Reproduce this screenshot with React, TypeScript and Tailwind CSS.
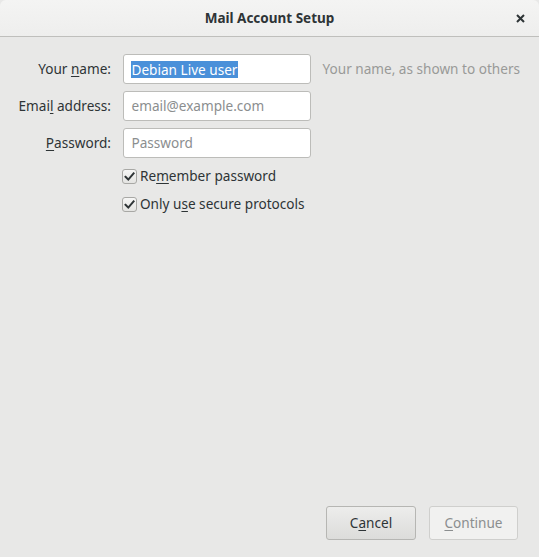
import React from 'react'

function Check() {
  return (
    <span className="flex h-[15px] w-[15px] shrink-0 items-center justify-center rounded-[3px] border border-[#a8a8a5] bg-gradient-to-b from-[#f6f6f5] to-[#e4e4e2]">
      <svg width="11" height="11" viewBox="0 0 11 11">
        <path d="M1.5 5.8 L4.3 8.6 L9.6 2.4" fill="none" stroke="#2e3436" strokeWidth="2" strokeLinecap="square" />
      </svg>
    </span>
  )
}

function Row({ label, children, hint }: { label: React.ReactNode; children: React.ReactNode; hint?: string }) {
  return (
    <div className="flex items-center">
      <label className="w-[111px] pr-0 text-right text-[13.6px] text-[#2e3436]">{label}</label>
      <div className="ml-[11.5px] w-[188px]">{children}</div>
      {hint && <span className="ml-[12px] text-[13.6px] text-[#999a98] whitespace-nowrap">{hint}</span>}
    </div>
  )
}

export default function App() {
  return (
    <div
      className="flex h-[557px] w-[539px] flex-col overflow-hidden bg-[#e8e8e7]"
      style={{ fontFamily: '"Noto Sans", "Open Sans", "DejaVu Sans", sans-serif' }}
    >
      <div className="relative flex h-[37px] shrink-0 items-center justify-center rounded-t-[6px] border-b border-[#bfbfbc] bg-gradient-to-b from-[#f4f4f3] to-[#eeeeed]">
        <span className="text-[13.5px] font-bold text-[#2e3436]">Mail Account Setup</span>
        <svg className="absolute right-[14px] top-[14px]" width="9" height="9" viewBox="0 0 9 9">
          <path d="M1 1 L8 8 M8 1 L1 8" stroke="#2e3436" strokeWidth="2" />
        </svg>
      </div>

      <div className="flex flex-1 flex-col pt-[17px]">
        <div className="flex flex-col gap-[7px]">
          <Row
            label={<>Your <u className="underline-offset-2">n</u>ame:</>}
            hint="Your name, as shown to others"
          >
            <div className="flex h-[30px] items-center rounded-[3px] border border-[#bcbcb9] bg-white px-[7px] text-[13.6px]">
              <span className="bg-[#4a90d9] px-[1px] leading-[17px] text-white">Debian Live user</span>
            </div>
          </Row>
          <Row label={<>Emai<u className="underline-offset-2">l</u> address:</>}>
            <div className="flex h-[30px] items-center rounded-[3px] border border-[#bcbcb9] bg-white px-[8px] text-[13.6px] text-[#8b8e8f]">
              email@example.com
            </div>
          </Row>
          <Row label={<><u className="underline-offset-2">P</u>assword:</>}>
            <div className="flex h-[30px] items-center rounded-[3px] border border-[#bcbcb9] bg-white px-[8px] text-[13.6px] text-[#8b8e8f]">
              Password
            </div>
          </Row>
        </div>

        <div className="ml-[122px] mt-[11px] flex flex-col gap-[13px] text-[13.6px] text-[#2e3436]">
          <div className="flex h-[15px] items-center gap-[3px]">
            <Check />
            <span>Re<u className="underline-offset-2">m</u>ember password</span>
          </div>
          <div className="flex h-[15px] items-center gap-[3px]">
            <Check />
            <span>Only u<u className="underline-offset-2">s</u>e secure protocols</span>
          </div>
        </div>

        <div className="mt-auto flex justify-end gap-[13px] pb-[17px] pr-[21px]">
          <button className="h-[34px] w-[90px] rounded-[3px] border border-[#b6b6b3] bg-gradient-to-b from-[#ededec] to-[#dcdcda] text-[13.6px] text-[#2e3436]">
            C<u className="underline-offset-2">a</u>ncel
          </button>
          <button className="h-[34px] w-[89px] rounded-[3px] border border-[#cfcfcd] bg-[#f1f1f0] text-[13.6px] text-[#8b8e8f]">
            <u className="underline-offset-2">C</u>ontinue
          </button>
        </div>
      </div>
    </div>
  )
}
